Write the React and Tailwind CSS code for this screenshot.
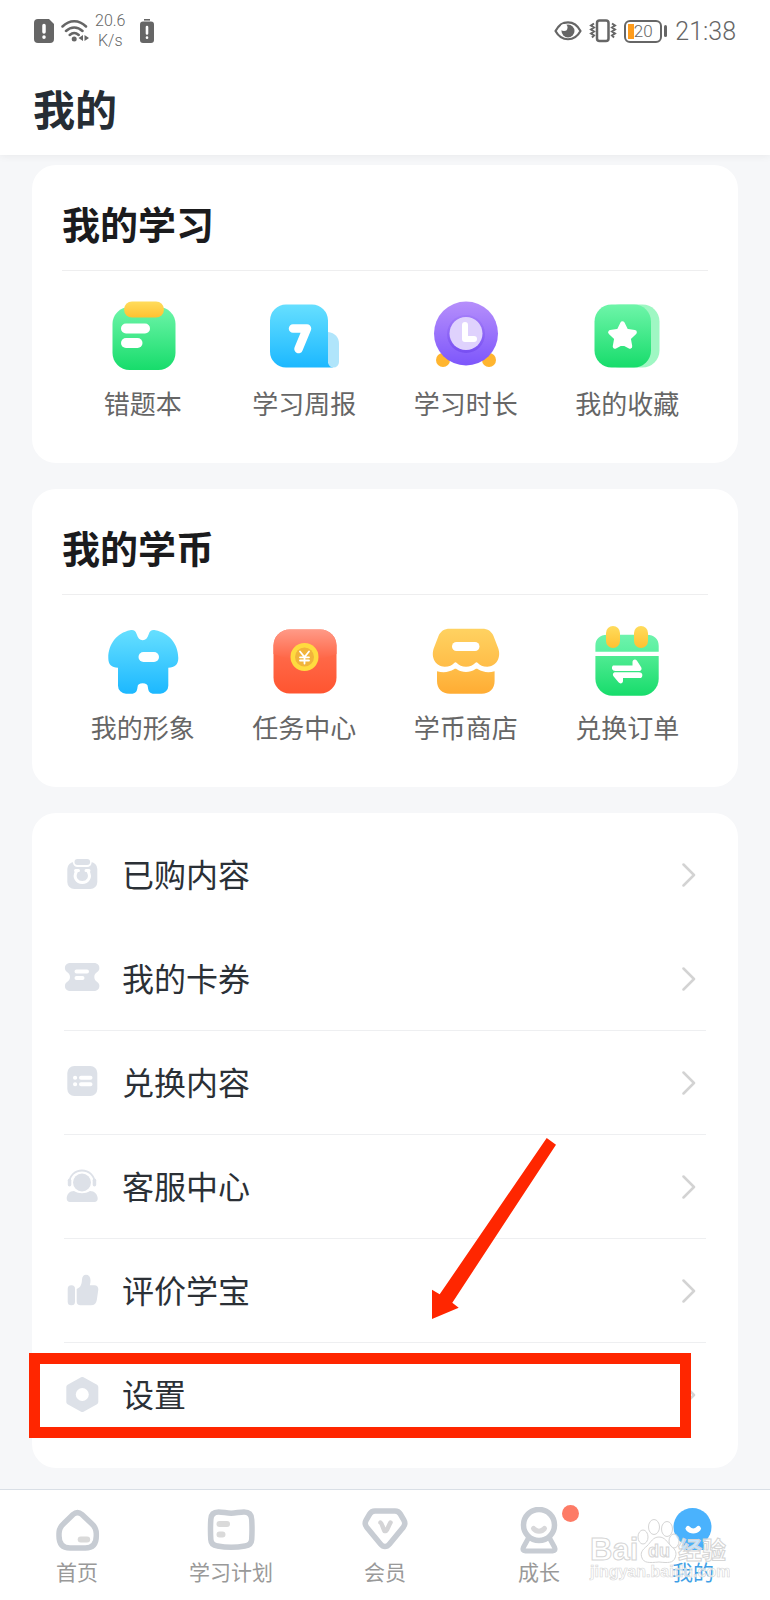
const Gradient = ({ id, from, to }) => (
  <linearGradient id={id} x1="0" y1="0" x2="0" y2="1">
    <stop offset="0" stopColor={from} />
    <stop offset="1" stopColor={to} />
  </linearGradient>
);

/* Feature icons */
const MistakeBookIcon = () => (
  <svg viewBox="0 0 80 80" className="size-20">
    <defs>
      <Gradient id="book" from="#6ef5a9" to="#17dc6b" />
      <Gradient id="bookClip" from="#ffdc5c" to="#ffc131" />
    </defs>
    <rect x="9.5" y="11" width="63" height="63" rx="17" fill="url(#book)" />
    <rect x="21" y="5.5" width="40" height="16" rx="8" fill="url(#bookClip)" />
    <rect x="18" y="27.5" width="29" height="10" rx="5" fill="#fff" />
    <rect x="18" y="42" width="21.5" height="10" rx="5" fill="#fff" />
  </svg>
);

const WeeklyIcon = () => (
  <svg viewBox="0 0 80 80" className="size-20">
    <defs>
      <Gradient id="week" from="#66dfff" to="#1cb8ff" />
    </defs>
    <path d="M22 8.5h26a16 16 0 0 1 16 16v42l5 5H22a16 16 0 0 1-16-16v-31a16 16 0 0 1 16-16z" fill="url(#week)" />
    <path d="M64 36c7 1 11 5 11 12v18a5.500 5.500 0 0 1-11 0z" fill="#b0e5fb" />
    <path d="M29 32.500h14l-8.500 20.500" fill="none" stroke="#fff" strokeWidth="8.500" strokeLinecap="round" strokeLinejoin="round" />
  </svg>
);

const ClockIcon = () => (
  <svg viewBox="0 0 80 80" className="size-20">
    <defs>
      <Gradient id="clock" from="#b68ffb" to="#7d56fb" />
      <Gradient id="clockRing" from="#9f78f8" to="#7047ee" />
    </defs>
    <circle cx="17" cy="64" r="7" fill="#ffb52f" />
    <circle cx="63" cy="64" r="7" fill="#ffb52f" />
    <circle cx="40" cy="37.500" r="32" fill="url(#clock)" />
    <circle cx="40" cy="38" r="19" fill="url(#clockRing)" fillOpacity="0.7" />
    <circle cx="40" cy="37.500" r="16.500" fill="#dfd2fd" />
    <path d="M39 29v14h9" fill="none" stroke="#fff" strokeWidth="6" strokeLinecap="round" strokeLinejoin="round" />
  </svg>
);

const FavoriteIcon = () => (
  <svg viewBox="0 0 80 80" className="size-20">
    <defs>
      <Gradient id="fav" from="#6ef5a9" to="#17dc6b" />
    </defs>
    <rect x="16" y="8.500" width="56.500" height="63" rx="17" fill="#9ff7c3" />
    <rect x="7.500" y="8.500" width="56.500" height="63" rx="17" fill="url(#fav)" />
    <path
      d="M35.500 27.500l3.700 7.600 8.400 1.200-6.100 5.900 1.500 8.300-7.500-4-7.500 4 1.500-8.300-6.100-5.900 8.400-1.200z"
      fill="#fff"
      stroke="#fff"
      strokeWidth="4.500"
      strokeLinejoin="round"
    />
  </svg>
);

const AvatarIcon = () => (
  <svg viewBox="0 0 80 80" className="size-20">
    <defs>
      <Gradient id="shirt" from="#66dfff" to="#1cb8ff" />
    </defs>
    <path
      d="M27 10.300c3.500-.8 5.500.4 6.700 4 1.200 3.800 3 6 6 6s4.800-2.200 6-6c1.200-3.600 3.200-4.800 6.700-4C66 13 75.300 24 75.300 38c0 6.500-3.500 9.700-10 9.700v18a8 8 0 0 1-8 8h-6c-4.500 0-6-2.200-6.400-6.500-.2-3-1.900-4-5.200-4s-5 1-5.200 4c-.4 4.300-1.900 6.500-6.400 6.500H23a8 8 0 0 1-8-8v-18c-6.500 0-9.700-3.200-9.700-9.700C5.300 24 14 13 27 10.300z"
      fill="url(#shirt)"
    />
    <rect x="35.500" y="32" width="20.500" height="10" rx="5" fill="#fff" />
  </svg>
);

const TaskIcon = () => (
  <svg viewBox="0 0 80 80" className="size-20">
    <defs>
      <Gradient id="packet" from="#ff7659" to="#ff5530" />
      <Gradient id="packetFlap" from="#ff9a87" to="#ff6545" />
    </defs>
    <rect x="9.500" y="9.500" width="63" height="64" rx="16" fill="url(#packet)" />
    <path d="M25.500 9.500h31a16 16 0 0 1 16 16V34c-19 7.500-44 7.500-63 0v-8.500a16 16 0 0 1 16-16z" fill="url(#packetFlap)" />
    <circle cx="40.500" cy="37" r="14" fill="#ffdb3f" />
    <circle cx="40.500" cy="37" r="9.500" fill="#f1b43b" />
    <path d="M36 31.500l4.500 5.500 4.500-5.500M40.500 37v6.500M36 37.300h9M36 40.500h9" fill="none" stroke="#fff" strokeWidth="1.800" strokeLinecap="round" />
  </svg>
);

const StoreIcon = () => (
  <svg viewBox="0 0 80 80" className="size-20">
    <defs>
      <Gradient id="roof" from="#ffd261" to="#ffbd48" />
      <Gradient id="shop" from="#ffbd48" to="#ffac33" />
    </defs>
    <path
      d="M24 8.700h32c6 0 9.500 2.500 11.500 7.300l4.800 12.500c3 9-2 18.200-11 18.200-4.500 0-7.500-1.300-9.500-3.700-.8-.9-1.800-.9-2.600 0-2.200 2.400-5.200 3.700-9.200 3.700s-7-1.300-9.200-3.700c-.8-.9-1.800-.9-2.600 0-2 2.400-5 3.700-9.500 3.700-9 0-14-9.200-11-18.200L12.500 16c2-4.800 5.500-7.300 11.500-7.300z"
      fill="url(#roof)"
    />
    <path
      d="M11 51.300c7 1.700 12.500.7 17-2 1-.6 1.800-.6 2.800 0 5.500 3.600 12.900 3.600 18.400 0 1-.6 1.800-.6 2.800 0 4.500 2.700 10 3.700 16.600 2V61c0 8-5 12.700-13 12.700H24c-8 0-13-4.700-13-12.700z"
      fill="url(#shop)"
    />
    <rect x="26" y="22" width="27.500" height="9" rx="4.500" fill="#fff" />
  </svg>
);

const OrderIcon = () => (
  <svg viewBox="0 0 80 80" className="size-20">
    <defs>
      <Gradient id="calTop" from="#6ff3ad" to="#5bf0a0" />
      <Gradient id="cal" from="#4feb92" to="#17dc6b" />
      <Gradient id="ring" from="#ffdc5c" to="#ffc131" />
    </defs>
    <path d="M20 14.700h40c7 0 11.700 4 11.700 11v6H8.400v-6c0-7 4.600-11 11.600-11z" fill="url(#calTop)" />
    <path d="M8.400 36h63.300v22.700a17 17 0 0 1-17 17H25.400a17 17 0 0 1-17-17z" fill="url(#cal)" />
    <rect x="19" y="6" width="14" height="22" rx="7" fill="url(#ring)" />
    <rect x="47" y="6" width="14" height="22" rx="7" fill="url(#ring)" />
    <path d="M26 45.500h19.500V42c0-2.500 3-3.300 4.500-1.300l4 6.300c1.300 2 .2 4-2 4H28.500c-3.500 0-4.500-3.500-2.500-5.500zM54 58H36v3c0 2.500-3 3.300-4.500 1.300l-5-6c-1.300-2-.2-4 2-4H52c3.500 0 4.500 3.700 2 5.700z" fill="#fff" />
  </svg>
);

/* List icons */
const BoughtIcon = () => (
  <svg viewBox="0 0 36 36" className="size-9">
    <rect x="3.300" y="5" width="30" height="27" rx="7" fill="#dde1e8" />
    <rect x="9" y="1" width="18.600" height="9" rx="4.500" fill="#fff" />
    <rect x="10.500" y="2" width="15.600" height="6" rx="3" fill="#dde1e8" />
    <path d="M12.500 14.500c-3.500 6 .5 11 5.800 11s9.300-5 5.800-11" fill="none" stroke="#fff" strokeWidth="3" strokeLinecap="round" />
    <path d="M11.500 13.500h3M22 13.500h3" stroke="#fff" strokeWidth="3" strokeLinecap="round" />
  </svg>
);

const CouponIcon = () => (
  <svg viewBox="0 0 36 36" className="size-9">
    <path
      d="M6.500 2h23.300c4 0 6 2.500 5.500 6-.4 3-5 3.500-5 8s4.600 5 5 8c.5 3.500-1.500 6-5.500 6H6.500C2.500 30 .5 27.500 1 24c.4-3 5-3.500 5-8s-4.600-5-5-8c-.5-3.500 1.500-6 5.500-6z"
      fill="#dde1e8"
    />
    <path d="M12.500 10.500h10.500M12.500 17h6" fill="none" stroke="#fff" strokeWidth="4" strokeLinecap="round" />
  </svg>
);

const RedeemIcon = () => (
  <svg viewBox="0 0 36 36" className="size-9">
    <rect x="3.300" y="1" width="30" height="30" rx="7" fill="#dde1e8" />
    <path d="M11 12.700h.2M11 19.200h.2M17 12.700h9.500M17 19.200h9.500" fill="none" stroke="#fff" strokeWidth="4" strokeLinecap="round" />
  </svg>
);

const ServiceIcon = () => (
  <svg viewBox="0 0 36 36" className="size-9">
    <path d="M5.500 13a12.500 11.500 0 0 1 25 0" fill="none" stroke="#dde1e8" strokeWidth="1.800" />
    <rect x="3.800" y="9.500" width="3.500" height="8" rx="1.700" fill="#dde1e8" />
    <rect x="28.700" y="9.500" width="3.500" height="8" rx="1.700" fill="#dde1e8" />
    <path d="M10 22c5 3 11 3 16 0 4.500 0 7.700 3.500 7.700 7.500 0 2-1.200 3.500-3.200 3.500H6c-2 0-3.300-1.500-3.300-3.500C2.700 25.500 5.500 22 10 22z" fill="#dde1e8" />
    <circle cx="18" cy="13.500" r="9" fill="#dde1e8" />
  </svg>
);

const ThumbIcon = () => (
  <svg viewBox="0 0 36 36" className="size-9">
    <rect x="3.700" y="12.300" width="7.300" height="20" rx="3.500" fill="#dde1e8" />
    <path
      d="M12.700 16c4-1.500 5-4.500 5.300-9.500.2-3 1.700-4.800 4-4.800 2.700 0 4.500 2 4.500 5.500 0 2-.3 3.500-.7 5.100h4.500c2.700 0 4.300 2 4 4.500l-1.500 10.200c-.5 3.500-2.500 5.300-6 5.300H16.500c-2.500 0-3.800-1.300-3.800-3.800z"
      fill="#dde1e8"
    />
  </svg>
);

const SettingsIcon = () => (
  <svg viewBox="0 0 36 36" className="size-9">
    <path
      d="M18.300 2.500l13.500 7.500v15l-13.500 7.500L4.800 25V10z"
      fill="#dde1e8"
      stroke="#dde1e8"
      strokeWidth="5"
      strokeLinejoin="round"
    />
    <circle cx="18.300" cy="17.500" r="6.500" fill="#fff" />
  </svg>
);

/* Tab bar icons */
const HomeTab = () => (
  <svg viewBox="0 0 48 48" className="size-12" fill="none">
    <path
      d="M20 7.500c3-2.600 6-2.600 9 0L38.500 16.500c3.300 3 4.800 6 4.800 10V29c0 8-3.500 12-11 12H17c-7.500 0-11-4-11-12v-2.500c0-4 1.500-7 4.800-10z"
      stroke="#c7ccd3"
      strokeWidth="5.500"
    />
    <path d="M27.700 32.500h6.500" stroke="#dadada" strokeWidth="6" strokeLinecap="round" />
  </svg>
);

const PlanTab = () => (
  <svg viewBox="0 0 48 48" className="size-12" fill="none">
    <path
      d="M11.500 5c4.500 0 8 1.200 12.700 1.200S32.500 5 37 5c5 0 7.500 2.500 7.700 7.500.4 6.500.4 13.500 0 20-.2 4-2.700 6-6.700 6.500-9.500 1.800-18 1.800-27.500 0-4-.5-6.500-2.500-6.700-6.500-.4-6.500-.4-13.500 0-20C4 7.500 6.500 5 11.500 5z"
      stroke="#c7ccd3"
      strokeWidth="5.500"
    />
    <path d="M12.500 17h7.500M12.500 27.500h3" stroke="#dadada" strokeWidth="6" strokeLinecap="round" />
  </svg>
);

const VipTab = () => (
  <svg viewBox="0 0 48 48" className="size-12" fill="none">
    <path
      d="M14 4h20c2.500 0 4 .8 5.300 3l3.500 6c1.600 2.700 1.400 4.800-.5 7.200L28.500 37c-2.900 3.400-6.100 3.400-9 0L5.700 20.200c-1.900-2.400-2.100-4.500-.5-7.200l3.500-6C10 4.800 11.500 4 14 4z"
      stroke="#c7ccd3"
      strokeWidth="5.500"
    />
    <path d="M19.500 15.500c1.500 1 2 4.500 4 8.500h1.500c2-2 2.500-5.500 4.500-8.500" stroke="#d4d4d6" strokeWidth="4.500" strokeLinecap="round" strokeLinejoin="round" />
  </svg>
);

const GrowthTab = () => (
  <svg viewBox="0 0 48 48" className="size-12" fill="none">
    <circle cx="24" cy="18" r="15.500" stroke="#c7ccd3" strokeWidth="5.500" />
    <path d="M13.500 31L8.300 40.500c-1 2.300-.3 3.500 2 3.500h27.400c2.300 0 3-1.200 2-3.500L34.500 31" stroke="#c7ccd3" strokeWidth="5" strokeLinejoin="round" />
    <path d="M18.500 21.500c3 3.500 8 3.500 11 0" stroke="#d8d8da" strokeWidth="5" strokeLinecap="round" />
  </svg>
);

const MineTab = () => (
  <svg viewBox="0 0 48 48" className="size-12" fill="none">
    <path d="M14 34h20l2 9H12z" fill="#47aefb" />
    <circle cx="23.500" cy="20" r="19" fill="#4ab2fd" />
    <path d="M19 21.500c3 3.300 7.500 3.300 10.500 0" stroke="#fff" strokeWidth="5" strokeLinecap="round" />
  </svg>
);

const studyItems = [
  { label: '错题本', Icon: MistakeBookIcon },
  { label: '学习周报', Icon: WeeklyIcon },
  { label: '学习时长', Icon: ClockIcon },
  { label: '我的收藏', Icon: FavoriteIcon },
];

const coinItems = [
  { label: '我的形象', Icon: AvatarIcon },
  { label: '任务中心', Icon: TaskIcon },
  { label: '学币商店', Icon: StoreIcon },
  { label: '兑换订单', Icon: OrderIcon },
];

const menuItems = [
  { label: '已购内容', Icon: BoughtIcon, divider: false },
  { label: '我的卡券', Icon: CouponIcon, divider: true },
  { label: '兑换内容', Icon: RedeemIcon, divider: true },
  { label: '客服中心', Icon: ServiceIcon, divider: true },
  { label: '评价学宝', Icon: ThumbIcon, divider: true },
  { label: '设置', Icon: SettingsIcon, divider: false, marked: true },
];

const tabs = [
  { label: '首页', Icon: HomeTab },
  { label: '学习计划', Icon: PlanTab },
  { label: '会员', Icon: VipTab },
  { label: '成长', Icon: GrowthTab, dot: true },
  { label: '我的', Icon: MineTab, active: true },
];

const StatusBar = () => (
  <div className="flex h-[62px] items-center justify-between px-[34px] text-[#666] font-[Roboto,sans-serif]">
    <div className="flex items-center">
      <svg viewBox="0 0 20 24" className="w-5 h-6">
        <path d="M4 0h11l5 5v15a4 4 0 0 1-4 4H4a4 4 0 0 1-4-4V4a4 4 0 0 1 4-4z" fill="#666" />
        <path d="M10 6.500v6.500M10 18v.3" stroke="#fff" strokeWidth="3.500" strokeLinecap="round" />
      </svg>
      <svg viewBox="0 0 28 24" className="ml-[7px] w-7 h-6" fill="none">
        <path d="M1.500 7.500c7-7 16.500-7 23.500 0M5 12c5-4.800 11.500-4.800 16.500 0M8.700 16c3-2.700 6-2.700 9 0" stroke="#666" strokeWidth="2.500" strokeLinecap="round" />
        <circle cx="13.200" cy="20" r="2.500" fill="#666" />
        <path d="M22 16v6l-4.500-3zM23.500 16v6l4.500-3z" fill="#666" />
      </svg>
      <div className="ml-1.5 text-center text-base leading-5 font-light">
        <p>20.6</p>
        <p>K/s</p>
      </div>
      <svg viewBox="0 0 14 24" className="ml-[15px] w-[14px] h-6">
        <path d="M4 .8h6" stroke="#666" strokeWidth="1.600" />
        <rect y="2.500" width="14" height="21.500" rx="3" fill="#666" />
        <path d="M7 8v6.500M7 18.500v.2" stroke="#fff" strokeWidth="2.600" strokeLinecap="round" />
      </svg>
    </div>
    <div className="flex items-center">
      <svg viewBox="0 0 28 20" className="w-7 h-5" fill="none">
        <path d="M1.500 10C7.500-1.500 20.500-1.500 26.500 10c-6 11-19 11-25 0z" stroke="#666" strokeWidth="2.200" strokeLinejoin="round" />
        <circle cx="14" cy="10" r="6.500" fill="#666" />
        <circle cx="10" cy="6.500" r="3.500" fill="#fff" />
      </svg>
      <svg viewBox="0 0 28 24" className="ml-[7px] w-7 h-6" fill="none" stroke="#666">
        <rect x="8" y="1.500" width="11.500" height="20.500" rx="2.500" strokeWidth="2.500" />
        <path d="M5 4.500l-3 2 3 2-3 2 3 2-3 2 3 2-2 2M23 4.500l3 2-3 2 3 2-3 2 3 2-3 2 2 2" strokeWidth="2" />
      </svg>
      <div className="relative ml-[7px] flex h-[23px] w-[38px] items-center justify-center rounded-md border-2 border-[#666] text-[17px] leading-none font-light">
        <span className="absolute left-0.5 top-0.5 h-[15px] w-1.5 bg-[#ff9c1b]" />
        <span className="relative">20</span>
      </div>
      <span className="ml-0.5 h-3 w-[3px] rounded-sm bg-[#666]" />
      <span className="ml-2 text-[25px] leading-none font-light">21:38</span>
    </div>
  </div>
);

const FeatureCard = ({ title, items }) => (
  <section className="h-[298px] rounded-3xl bg-white px-[30px]">
    <h2 className="flex h-[106px] items-center border-b border-[#eeeeef] pt-2.5 text-[38px] leading-none font-bold text-[#1b1b1d]">
      {title}
    </h2>
    <div className="grid grid-cols-4 pt-[25px]">
      {items.map(({ label, Icon }) => (
        <a key={label} href="#" className="flex flex-col items-center">
          <Icon />
          <span className="mt-2 text-[26px] leading-[38px] text-[#666]">{label}</span>
        </a>
      ))}
    </div>
  </section>
);

const Watermark = () => (
  <svg
    viewBox="0 0 144 68"
    className="pointer-events-none absolute bottom-4 right-10 w-36 h-[68px]"
    fill="#ffffff"
    fillOpacity="0.7"
    stroke="#d5d5d5"
    fontWeight="bold"
    fontFamily="'Liberation Sans', 'Noto Sans CJK SC', sans-serif"
  >
    <text x="4" y="44" fontSize="31">Bai</text>
    <ellipse cx="57" cy="21" rx="5" ry="7" />
    <ellipse cx="68" cy="11" rx="5.500" ry="7.500" />
    <ellipse cx="81" cy="13" rx="5.500" ry="7.500" />
    <ellipse cx="88" cy="25" rx="5" ry="7" />
    <path d="M73 21c6 0 8 5 12 9 5 4 6 7 4 12-2 5-7 5-16 4-10 1-15 1-17-4-2-5 0-8 5-12 4-4 6-9 12-9z" />
    <text x="62" y="41" fontSize="18">du</text>
    <text x="92" y="43" fontSize="24">经验</text>
    <text x="4" y="61" fontSize="16" strokeWidth="0.600">jingyan.baidu.com</text>
  </svg>
);

export default function App() {
  return (
    <div className="flex min-h-screen flex-col bg-[#f6f7f9] font-['Noto_Sans_CJK_SC',sans-serif]">
      <header className="relative h-[155px] bg-white shadow-[0_1px_8px_rgba(0,0,0,0.06)]">
        <StatusBar />
        <h1 className="px-[33px] text-[42px] leading-[92px] font-bold text-[#262d34]">我的</h1>
      </header>

      <main className="flex flex-1 flex-col gap-[26px] px-8 pt-2.5 pb-5">
        <FeatureCard title="我的学习" items={studyItems} />
        <FeatureCard title="我的学币" items={coinItems} />

        <section className="relative rounded-3xl bg-white px-8 pt-2.5 pb-[21px]">
          {menuItems.map(({ label, Icon, divider, marked }) => (
            <a
              key={label}
              href="#"
              className={`relative flex h-26 items-center border-b ${divider ? 'border-[#eeeff1]' : 'border-transparent'}`}
            >
              <Icon />
              <span className="ml-[22px] flex-1 pb-1 text-[32px] leading-none text-[#2b3036]">{label}</span>
              <svg viewBox="0 0 14 24" className="mr-2.5 w-[14px] h-6" fill="none">
                <path d="M1.500 1.500L12 12 1.500 22.500" stroke="#d3d3d3" strokeWidth="2.500" strokeLinecap="round" strokeLinejoin="round" />
              </svg>
              {marked && <span className="absolute -left-[35px] right-[15px] top-2.5 bottom-2 border-[11px] border-[#ff2600]" />}
            </a>
          ))}
          {/* arrow pointing at the settings row */}
          <svg viewBox="0 0 124 181" className="pointer-events-none absolute right-[182px] top-[325px] h-[181px] w-[124px]">
            <path d="M114.700 0L124 6.700 20.300 164.700 26.700 169.700 0 181V151.700L7.700 156.300z" fill="#ff2600" />
          </svg>
        </section>
      </main>

      <nav className="relative grid h-[111px] grid-cols-5 border-t border-[#d9dfe6] bg-white pt-[17px]">
        {tabs.map(({ label, Icon, dot, active }) => (
          <a key={label} href="#" className="flex flex-col items-center">
            <span className="relative">
              <Icon />
              {dot && <span className="absolute -right-4 -top-0.5 size-[17px] rounded-full bg-[#fd7b66]" />}
            </span>
            <span className={`text-[21px] leading-8 ${active ? 'text-[#3f9fe6]' : 'text-[#999]'}`}>{label}</span>
          </a>
        ))}
        <Watermark />
      </nav>
    </div>
  );
}
